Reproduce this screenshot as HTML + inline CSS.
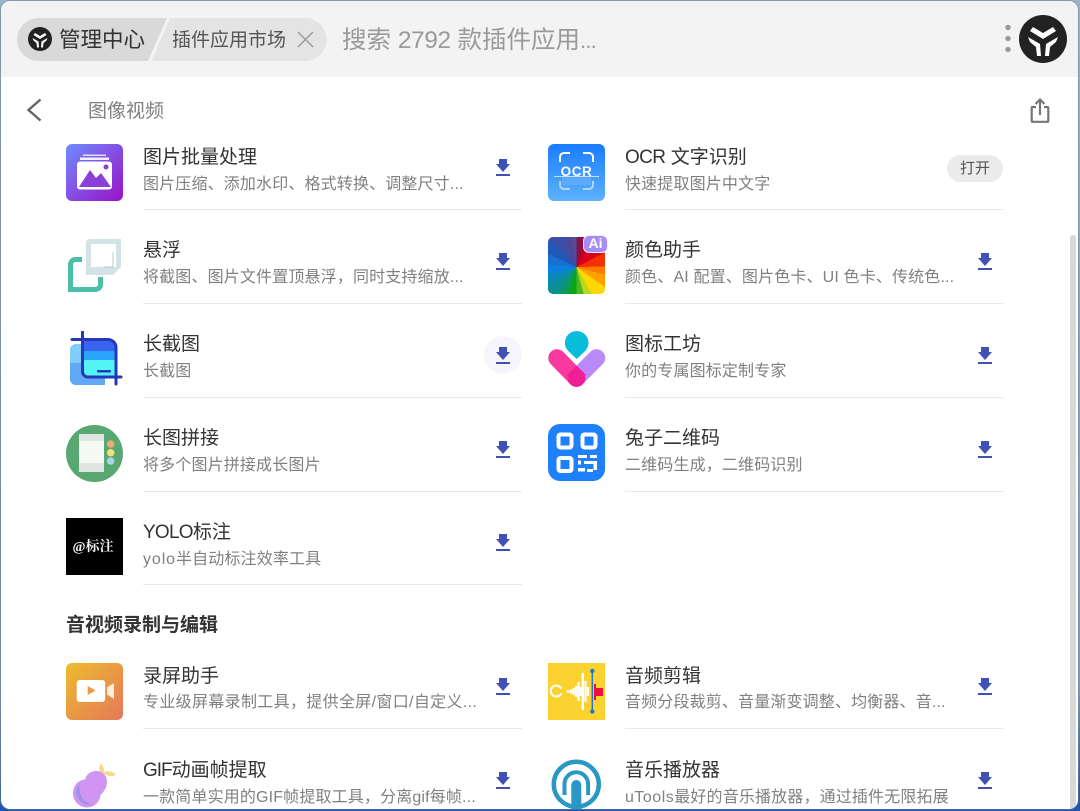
<!DOCTYPE html>
<html lang="zh"><head><meta charset="utf-8"><title>插件应用市场</title>
<style>
html,body{margin:0;padding:0;width:1080px;height:811px;overflow:hidden;}
body{font-family:"Liberation Sans","Noto Sans CJK SC",sans-serif;position:relative;background:linear-gradient(180deg,#9ab3c6 0,#8098b4 85%,#1f55b0 98%);}
#win{position:absolute;left:1px;top:1px;width:1077px;height:808px;background:#fff;border-radius:9px;overflow:hidden;box-shadow:0 0 0 1px rgba(110,125,145,.5);}
#w{position:absolute;left:-1px;top:-1px;width:1080px;height:811px;}
.a{position:absolute;white-space:nowrap;}
.t{position:absolute;left:143px;font-size:19px;line-height:26px;color:#333;white-space:nowrap;margin-top:1px;}
.d{position:absolute;left:143px;font-size:16px;line-height:22px;color:#808080;white-space:nowrap;margin-top:2px;letter-spacing:.15px;}
.r .t,.r .d{left:625px;}
.l{position:absolute;height:1px;background:#e8e8e8;left:143px;width:379px;}
.r .l{left:625px;width:378px;}
svg{position:absolute;display:block;}
</style></head><body>
<div id="win"><div id="w">
<svg width="0" height="0" style="position:absolute"><defs>
<symbol id="dl" viewBox="0 0 14 17"><path d="M3 0h8v5h3l-7 8-7-8h3z" fill="#3f51b5"/><rect x="0" y="15" width="14" height="2" fill="#3f51b5"/></symbol>
<symbol id="logo" viewBox="0 0 48 48"><circle cx="24" cy="24" r="24" fill="#222"/><g fill="#fff"><path d="M14 12L24 18 34 12 37 16 24 24 11 16z"/><path d="M9 22L21 29 22 41H18L17 32 11 27z"/><path d="M39 22L27 29 26 41H30L31 32 37 27z"/></g></symbol>
</defs></svg>

<!-- header -->
<div class="a" style="left:0;top:0;width:1080px;height:77px;background:#f3f3f3"></div>
<svg style="left:17px;top:18px" width="310" height="43" viewBox="0 0 310 43"><path d="M21.500 0H150L131 43H21.500a21.500 21.500 0 0 1 0-43z" fill="#d9d9d9"/><path d="M153 0H288a21.500 21.500 0 0 1 0 43H134.500z" fill="#e4e4e4"/></svg>
<svg style="left:28px;top:27px" width="24" height="24"><use href="#logo" width="24" height="24"/></svg>
<div class="a" style="left:59px;top:25px;font-size:21.500px;line-height:30px;color:#333">管理中心</div>
<div class="a" style="left:172px;top:28px;font-size:19px;line-height:26px;color:#555">插件应用市场</div>
<svg style="left:297px;top:31px" width="17" height="17"><path d="M1 1l15 15M16 1L1 16" stroke="#999" stroke-width="1.300" fill="none"/></svg>
<div class="a" style="left:342px;top:23px;font-size:24.500px;line-height:36px;color:#9a9a9a">搜索 <span style="letter-spacing:-.4px">2792</span> 款插件应用<span style="font-size:22px;letter-spacing:-.8px">...</span></div>
<svg style="left:1004px;top:24px" width="8" height="30"><circle cx="4" cy="3.500" r="2.700" fill="#999"/><circle cx="4" cy="14.500" r="2.700" fill="#999"/><circle cx="4" cy="25.500" r="2.700" fill="#999"/></svg>
<svg style="left:1019px;top:15px" width="48" height="48"><use href="#logo" width="48" height="48"/></svg>

<svg style="left:26px;top:98px" width="16" height="25"><path d="M14.500 1.500L2.500 12l12 10.500" stroke="#666" stroke-width="2.400" fill="none"/></svg>
<div class="a" style="left:88px;top:99px;font-size:19px;line-height:26px;color:#808080">图像视频</div>
<svg style="left:1029px;top:97px" width="22" height="27"><path d="M7 10H3.500a.8.8 0 0 0-.8.8V24a.8.8 0 0 0 .8.8h15a.8.8 0 0 0 .8-.8V10.800a.8.8 0 0 0-.8-.8H15" stroke="#777" stroke-width="2.200" fill="none"/><path d="M11 18V3M6.500 7L11 2.500 15.500 7" stroke="#777" stroke-width="2.200" fill="none"/></svg>

<!-- scrollbar -->
<div class="a" style="left:1070px;top:235px;width:6px;height:580px;background:#d8d8d8;border-radius:3px"></div>

<!-- LEFT -->
<div>
<svg style="left:66px;top:144px" width="57" height="57" viewBox="0 0 57 57"><defs><linearGradient id="g1" x1="0" y1="0" x2="1" y2="1"><stop offset="0" stop-color="#6f8cff"/><stop offset="1" stop-color="#9a10c8"/></linearGradient></defs><rect width="57" height="57" rx="6" fill="url(#g1)"/><rect x="17" y="10.500" width="23" height="1.500" fill="#fff" opacity=".8"/><rect x="14" y="13.500" width="29" height="2.500" fill="#fff" opacity=".9"/><rect x="11" y="17.500" width="35" height="28" rx="3" fill="#fff"/><path d="M13 43l11-17 6 8 5-5 10 14z" fill="#8a3fd6"/><circle cx="40" cy="23" r="2.500" fill="#8a3fd6"/></svg>
<div class="t" style="top:144px">图片批量处理</div><div class="d" style="top:172px">图片压缩、添加水印、格式转换、调整尺寸...</div>
<svg style="left:496px;top:159px" width="14" height="17"><use href="#dl"/></svg><div class="l" style="top:209px"></div>

<svg style="left:66px;top:237px" width="57" height="57" viewBox="0 0 57 57"><path d="M16 22.500H9.500a5 5 0 0 0-5 5V52.500H29.500a5 5 0 0 0 5-5V40" fill="none" stroke="#4dbfa8" stroke-width="5"/><path d="M24 2H55V30L47 38H20V6a4 4 0 0 1 4-4z" fill="#d2e3e6"/><rect x="25" y="7" width="25" height="23" fill="#fff"/><path d="M47 15v15M38 30h9.500" stroke="#b8c9cc" stroke-width="1"/></svg>
<div class="t" style="top:237px">悬浮</div><div class="d" style="top:265px">将截图、图片文件置顶悬浮，同时支持缩放...</div>
<svg style="left:496px;top:253px" width="14" height="17"><use href="#dl"/></svg><div class="l" style="top:303px"></div>

<svg style="left:66px;top:331px" width="57" height="57" viewBox="0 0 57 57"><path d="M10 13h29v41H10a6 6 0 0 1-6-6V19a6 6 0 0 1 6-6z" fill="#7fcdf8"/><path d="M4 32h35v22H10a6 6 0 0 1-6-6z" fill="#63a8f5"/><path d="M16.500 8.500H42a8 8 0 0 1 8 8V46H22a5.500 5.500 0 0 1-5.500-5.500z" fill="#2ba4fb"/><path d="M16.500 8.500H42a8 8 0 0 1 8 8V20H16.500z" fill="#3a63ef"/><path d="M16.500 29H50V46H22a5.500 5.500 0 0 1-5.500-5.500z" fill="#55f5f7"/><path d="M6 8.500H42a8 8 0 0 1 8 8V53M16.500 1V40.500a5.500 5.500 0 0 0 5.500 5.500H55" fill="none" stroke="#2438b8" stroke-width="3" stroke-linecap="round"/><rect x="31" y="39" width="14" height="2.500" rx="1" fill="#2438b8"/></svg>
<div class="t" style="top:331px">长截图</div><div class="d" style="top:359px">长截图</div>
<div class="a" style="left:484px;top:336px;width:38px;height:38px;border-radius:50%;background:#f5f5fb"></div>
<svg style="left:496px;top:347px" width="14" height="17"><use href="#dl"/></svg><div class="l" style="top:397px"></div>

<svg style="left:66px;top:425px" width="57" height="57" viewBox="0 0 57 57"><circle cx="28.500" cy="28.500" r="28.500" fill="#59a771"/><rect x="13" y="9" width="25" height="38" fill="#f4f9f5"/><rect x="13" y="9" width="25" height="7" fill="#dfe5e1"/><rect x="13" y="38" width="25" height="9" fill="#dfe5e1"/><circle cx="44.700" cy="19" r="3.700" fill="#f0a878"/><circle cx="44.700" cy="27.700" r="3.700" fill="#f6df7d"/><circle cx="44.700" cy="36" r="3.700" fill="#acd3e6"/></svg>
<div class="t" style="top:425px">长图拼接</div><div class="d" style="top:453px">将多个图片拼接成长图片</div>
<svg style="left:496px;top:441px" width="14" height="17"><use href="#dl"/></svg><div class="l" style="top:491px"></div>

<div class="a" style="left:66px;top:518px;width:57px;height:57px;background:#000;color:#f6f6f6;font-family:'Liberation Serif','Noto Serif CJK SC',serif;font-weight:700;font-size:14px;line-height:60px;text-align:center;text-indent:-3px">@标注</div>
<div class="t" style="top:519px"><span style="letter-spacing:-.75px">YOLO</span>标注</div><div class="d" style="top:546px;margin-top:3px"><span style="letter-spacing:.9px">yolo</span>半自动标注效率工具</div>
<svg style="left:496px;top:534px" width="14" height="17"><use href="#dl"/></svg><div class="l" style="top:584px"></div>
</div>

<!-- RIGHT -->
<div class="r">
<svg style="left:548px;top:144px" width="57" height="57" viewBox="0 0 57 57"><defs><linearGradient id="g2" x1="0" y1="0" x2="0" y2="1"><stop offset="0" stop-color="#1a7cff"/><stop offset="1" stop-color="#5db2fb"/></linearGradient></defs><rect width="57" height="57" rx="6" fill="url(#g2)"/><path d="M12 18v-5a4 4 0 0 1 4-4h6M35 9h6a4 4 0 0 1 4 4v5" fill="none" stroke="#fff" stroke-width="2"/><path d="M12 37v4a4 4 0 0 0 4 4h6M35 45h6a4 4 0 0 0 4-4v-4" fill="none" stroke="#fff" stroke-opacity=".55" stroke-width="2"/><rect x="6" y="32" width="45" height="1" fill="#fff" opacity=".7"/><rect x="14" y="33" width="29" height="8" fill="#fff" opacity=".12"/><text x="28.500" y="32" text-anchor="middle" font-family="Liberation Sans,sans-serif" font-weight="700" font-size="13.500" letter-spacing=".6" fill="#fff">OCR</text></svg>
<div class="t" style="top:144px"><span style="letter-spacing:-.6px">OCR</span> 文字识别</div><div class="d" style="top:172px">快速提取图片中文字</div>
<div class="a" style="left:947px;top:155px;width:56px;height:27px;border-radius:14px;background:#ebebeb;color:#555;font-size:15px;line-height:27px;text-align:center">打开</div>
<div class="l" style="top:209px"></div>

<div class="a" style="left:548px;top:237px;width:57px;height:57px;border-radius:5px;background:conic-gradient(from 0deg at 50% 53%,#7c1550 0 12deg,#b5002a 12deg 30deg,#d8001a 30deg 62deg,#f53000 62deg 88deg,#ff7a00 88deg 105deg,#ffa000 105deg 125deg,#ffd800 125deg 150deg,#b8d820 150deg 165deg,#4cb820 165deg 180deg,#0aa510 180deg 197deg,#0a9a60 197deg 215deg,#0a9090 215deg 235deg,#0a88b8 235deg 255deg,#0a80e0 255deg 275deg,#1570d0 275deg 295deg,#2058b8 295deg 315deg,#3a4fa8 315deg 335deg,#4a4a9c 335deg 350deg,#5a4a90 350deg 360deg)"></div>
<div class="a" style="left:583px;top:235px;width:25px;height:18px;box-sizing:border-box;border:1.500px solid #f3effe;border-radius:6px;background:#a68cf5;color:#fff;font-weight:700;font-size:14px;line-height:15px;text-align:center">Ai</div>
<div class="t" style="top:237px">颜色助手</div><div class="d" style="top:265px">颜色、AI 配置、图片色卡、UI 色卡、传统色...</div>
<svg style="left:978px;top:253px" width="14" height="17"><use href="#dl"/></svg><div class="l" style="top:303px"></div>

<svg style="left:548px;top:331px" width="58" height="57" viewBox="0 0 58 57"><path d="M28.700 28l-8.500-8a11.800 11.800 0 1 1 17 0z" fill="#08bcdc"/><path d="M48.500 27L28.500 47" stroke="#b98af8" stroke-width="17.500" stroke-linecap="round"/><path d="M9 27L28.500 47" stroke="#f83aa0" stroke-width="17.500" stroke-linecap="round"/><path d="M28.500 34.500L37.500 43.500a9 9 0 0 1-18 0z" fill="#ef2096"/><circle cx="28.500" cy="47" r="8.900" fill="#ef2096"/></svg>
<div class="t" style="top:331px">图标工坊</div><div class="d" style="top:359px">你的专属图标定制专家</div>
<svg style="left:978px;top:347px" width="14" height="17"><use href="#dl"/></svg><div class="l" style="top:397px"></div>

<svg style="left:548px;top:424px" width="57" height="57" viewBox="0 0 57 57"><rect width="57" height="57" rx="12" fill="#1f80fb"/><g fill="none" stroke="#fff" stroke-width="4"><rect x="10.500" y="10.500" width="13" height="13" rx="2"/><rect x="34.500" y="10.500" width="13" height="13" rx="2"/><rect x="10.500" y="34" width="13" height="13" rx="2"/></g><g fill="#fff"><rect x="30" y="31" width="9" height="3"/><rect x="42" y="31" width="7" height="3"/><rect x="30" y="36.500" width="3" height="4"/><rect x="36" y="37" width="13" height="3"/><rect x="45.500" y="40" width="3.500" height="6"/><rect x="30" y="44" width="7" height="3.500"/><rect x="39" y="45" width="6" height="3"/></g></svg>
<div class="t" style="top:425px">兔子二维码</div><div class="d" style="top:453px">二维码生成，二维码识别</div>
<svg style="left:978px;top:441px" width="14" height="17"><use href="#dl"/></svg><div class="l" style="top:491px"></div>
</div>

<div class="a" style="left:66px;top:613px;font-size:19px;line-height:26px;font-weight:700;color:#333">音视频录制与编辑</div>

<div>
<svg style="left:66px;top:663px" width="57" height="57" viewBox="0 0 57 57"><defs><linearGradient id="g3" x1="0" y1="0" x2="1" y2="1"><stop offset="0" stop-color="#eebb2e"/><stop offset="1" stop-color="#e4785a"/></linearGradient></defs><rect width="57" height="57" rx="6" fill="url(#g3)"/><rect x="10.700" y="17" width="28.500" height="22" rx="3" fill="#fff"/><path d="M41 24.500l7-4.500v16l-7-4.500z" fill="#fdeedd"/><path d="M21.700 23l8 4.500-8 4.500z" fill="#ec9a3c"/></svg>
<div class="t" style="top:663px">录屏助手</div><div class="d" style="top:690px;letter-spacing:.33px">专业级屏幕录制工具，提供全屏/窗口/自定义...</div>
<svg style="left:496px;top:678px" width="14" height="17"><use href="#dl"/></svg><div class="l" style="top:728px"></div>

<svg style="left:70px;top:760px" width="50" height="50" viewBox="0 0 50 50"><path d="M31 3C28 8 29 13 33 15 35 11 34 7 31 3z" fill="#f7d98c"/><path d="M34 12C38 10 44 12 46 15 42 17 37 16 34 14z" fill="#f7d98c"/><path d="M37 21.500C37 15 32 11 26 11 20 11 16 15 15 19.500 8 20 3 26 3 33.300 3 41 9 47.500 17 47.500 24 47.500 30 42 30.500 35 34 32 37 27 37 21.500z" fill="#d095f2"/><path d="M7 27C4 36 10 46 23 45 15 43 9 37 9.500 26z" fill="#9e92e4"/></svg>
<div class="t" style="top:757px"><span style="letter-spacing:-1px">GIF</span>动画帧提取</div><div class="d" style="top:785px">一款简单实用的GIF帧提取工具，分离gif每帧...</div>
<svg style="left:496px;top:772px" width="14" height="17"><use href="#dl"/></svg>
</div>

<div class="r">
<svg style="left:548px;top:663px" width="57" height="57" viewBox="0 0 57 57"><rect width="57" height="57" fill="#fbd22f"/><circle cx="8.300" cy="28" r="5.500" fill="none" stroke="#fff" stroke-width="2"/><path d="M8.500 28l7-3.500v7z" fill="#fbd22f"/><path d="M18.500 28.500h3M23 26.500v4M25.500 25v7M28 23v11M30.500 19v19M32.800 24v9M34.800 10v37M37.500 18v21M40 24v9" stroke="#fff" stroke-width="2.300" fill="none"/><path d="M44.300 8v41" stroke="#1f78c8" stroke-width="1.500"/><circle cx="44.300" cy="8" r="2.200" fill="#1f78c8"/><circle cx="44.300" cy="48.500" r="2.200" fill="#1f78c8"/><path d="M46 21h2v4h7v8h-7v4h-2z" fill="#f0103c"/></svg>
<div class="t" style="top:663px">音频剪辑</div><div class="d" style="top:690px">音频分段裁剪、音量渐变调整、均衡器、音...</div>
<svg style="left:978px;top:678px" width="14" height="17"><use href="#dl"/></svg><div class="l" style="top:728px"></div>

<svg style="left:551px;top:759px" width="52" height="52" viewBox="0 0 52 52"><circle cx="25.300" cy="25.300" r="22.500" fill="none" stroke="#2a97c4" stroke-width="4.500"/><path d="M13.500 36V25a11.800 11.800 0 0 1 23.600 0V36" fill="none" stroke="#2a97c4" stroke-width="4"/><path d="M20.300 52V26a5 5 0 0 1 10 0V52z" fill="#2a97c4"/></svg>
<div class="t" style="top:757px">音乐播放器</div><div class="d" style="top:785px"><span style="letter-spacing:.5px">uTools</span>最好的音乐播放器，通过插件无限拓展</div>
<svg style="left:978px;top:772px" width="14" height="17"><use href="#dl"/></svg>
</div>
</div></div>
</body></html>
